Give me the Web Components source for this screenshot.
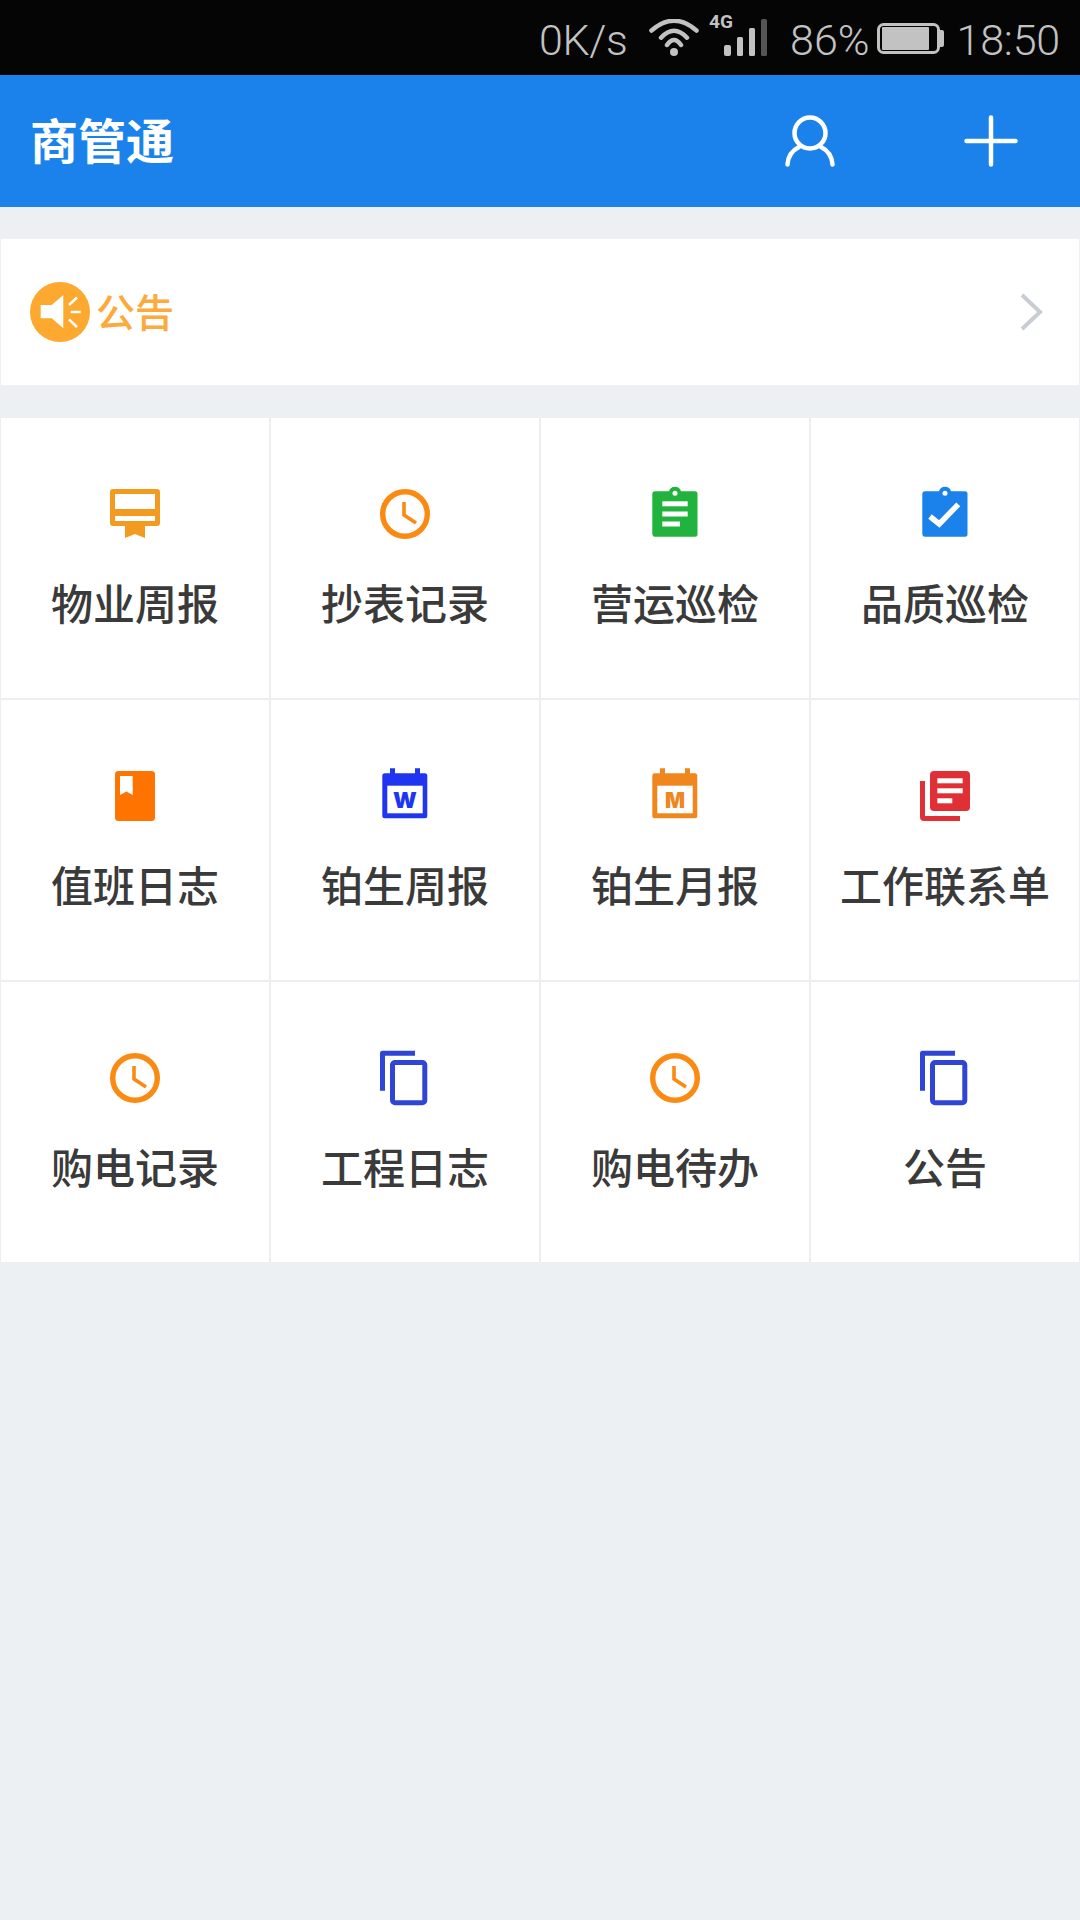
<!DOCTYPE html>
<html lang="zh-CN">
<head>
<meta charset="utf-8">
<title>商管通</title>
<style>
html,body{margin:0;padding:0;background:#ecf0f3;}
body{width:1080px;min-height:1920px;font-family:"Noto Sans CJK SC","Noto Sans",sans-serif;display:flex;flex-direction:column;}
</style>
</head>
<body>
<status-bar></status-bar>
<app-header title="商管通"></app-header>
<notice-bar>公告</notice-bar>
<app-grid>
  <grid-item icon="report" color="#f39a21">物业周报</grid-item>
  <grid-item icon="clock" color="#fb8a12">抄表记录</grid-item>
  <grid-item icon="clipLines" color="#22b33f">营运巡检</grid-item>
  <grid-item icon="clipCheck" color="#1a82ea">品质巡检</grid-item>
  <grid-item icon="book" color="#ff7300">值班日志</grid-item>
  <grid-item icon="calW" color="#2035f0">铂生周报</grid-item>
  <grid-item icon="calM" color="#f0861e">铂生月报</grid-item>
  <grid-item icon="news" color="#e02f35">工作联系单</grid-item>
  <grid-item icon="clock" color="#fb8a12">购电记录</grid-item>
  <grid-item icon="copy" color="#2f45d6">工程日志</grid-item>
  <grid-item icon="clock" color="#fb8a12">购电待办</grid-item>
  <grid-item icon="copy" color="#2f45d6">公告</grid-item>
</app-grid>
<script>
const ICONS = {
  report:`<path fill="currentColor" d="M3 0h44a3 3 0 0 1 3 3v31a3 3 0 0 1-3 3H35v12l-10-4-10 4V37H3a3 3 0 0 1-3-3V3a3 3 0 0 1 3-3z"/><rect x="5" y="5" width="40" height="15" fill="#fff"/><rect x="5" y="27" width="40" height="5" fill="#fff"/>`,
  clock:`<circle cx="25" cy="25" r="22.3" fill="none" stroke="currentColor" stroke-width="5.4"/><path d="M24 13v13l12 8" fill="none" stroke="currentColor" stroke-width="3.6"/>`,
  clipLines:`<path fill="currentColor" d="M5 2.3h14a6.2 6.2 0 0 1 12 0h14a2.5 2.5 0 0 1 2.5 2.5v40.4a2.5 2.5 0 0 1-2.5 2.5H5a2.7 2.7 0 0 1-2.7-2.5V4.8A2.5 2.5 0 0 1 5 2.3z"/><circle cx="25" cy="4.3" r="2.5" fill="#fff"/><rect x="12.3" y="12.3" width="25.4" height="5" fill="#fff"/><rect x="12.3" y="22.5" width="25.4" height="5" fill="#fff"/><rect x="12.3" y="32.5" width="17.7" height="5" fill="#fff"/>`,
  clipCheck:`<path fill="currentColor" d="M5 2.3h14a6.2 6.2 0 0 1 12 0h14a2.5 2.5 0 0 1 2.5 2.5v40.4a2.5 2.5 0 0 1-2.5 2.5H5a2.7 2.7 0 0 1-2.7-2.5V4.8A2.5 2.5 0 0 1 5 2.3z"/><circle cx="25" cy="4.3" r="2.5" fill="#fff"/><path d="M10 27.5l9.3 7.5 19-19.7" fill="none" stroke="#fff" stroke-width="5.5"/>`,
  book:`<rect x="5" y="0" width="40" height="50" rx="3.5" fill="currentColor"/><path fill="#fff" d="M10 5h12.7v19l-6.3-3.4L10 24z"/>`,
  calW:`<path fill="currentColor" d="M10-2.7h5v5h20v-5h5v5h4.8a2.5 2.5 0 0 1 2.5 2.5v40a2.5 2.5 0 0 1-2.5 2.5H4.8a2.5 2.5 0 0 1-2.5-2.5v-40a2.5 2.5 0 0 1 2.500-2.500H10z"/><rect x="7.3" y="14.7" width="35.4" height="27.6" fill="#fff"/><text x="25" y="37" text-anchor="middle" font-family="Inter,'Liberation Sans',sans-serif" font-weight="900" font-size="22" fill="currentColor">W</text>`,
  calM:`<path fill="currentColor" d="M10-2.7h5v5h20v-5h5v5h4.8a2.5 2.5 0 0 1 2.5 2.5v40a2.5 2.5 0 0 1-2.5 2.5H4.8a2.5 2.5 0 0 1-2.5-2.5v-40a2.5 2.5 0 0 1 2.500-2.500H10z"/><rect x="7.3" y="14.7" width="35.4" height="27.6" fill="#fff"/><text x="25" y="36.5" text-anchor="middle" font-family="Inter,'Liberation Sans',sans-serif" font-weight="900" font-size="21" fill="currentColor">M</text>`,
  news:`<rect x="10" y="0" width="40" height="40" rx="4" fill="currentColor"/><rect x="17.3" y="7.3" width="25.4" height="5" fill="#fff"/><rect x="17.3" y="17.3" width="25.4" height="5" fill="#fff"/><rect x="17.3" y="27.3" width="15" height="5" fill="#fff"/><path fill="currentColor" d="M0 10h5v35h35v5H4a4 4 0 0 1-4-4z"/>`,
  copy:`<path fill="currentColor" d="M2.500-2.300H35v5H5v35H0V.2a2.500 2.500 0 0 1 2.500-2.500z"/><rect x="12.500" y="9.500" width="32.300" height="40.300" rx="2.500" fill="none" stroke="currentColor" stroke-width="5"/>`
};

function define(name, css, html, setup){
  customElements.define(name, class extends HTMLElement{
    constructor(){
      super();
      const r = this.attachShadow({mode:'open'});
      r.innerHTML = `<style>${css}</style>${html}`;
    }
    connectedCallback(){ if(setup) setup(this, this.shadowRoot); }
  });
}

define('status-bar', `
  :host{display:flex;align-items:center;justify-content:flex-end;height:75px;background:#050505;color:#c2c2c2;
    font-family:Roboto,"Liberation Sans",sans-serif;font-weight:300;font-size:43px;line-height:52px;padding:4px 20px 0 0;box-sizing:border-box;flex:none;}
  svg{display:block;flex:none;}
  span{white-space:nowrap;flex:none;}
  .net{margin-right:21px;letter-spacing:-.3px;}
  .wifi{margin:0 10px 3px 0;}
  .sig{margin:0 23.5px 9px 0;}
  .pct{margin-right:7px;}
  .bat{margin:0 13px 2px 0;}
  .time{letter-spacing:-.2px;}
  .four{font-family:Roboto,"Liberation Sans",sans-serif;font-weight:700;font-size:19px;fill:#c2c2c2;}
`,`
  <span class="net">0K/s</span>
  <svg class="wifi" width="50" height="38" viewBox="0 0 50 38">
    <path d="M2.500 11.500Q25 -8 47.500 11.500M12 18.700Q25 4.700 38 18.700M18 26Q25 16 32 26" fill="none" stroke="#c2c2c2" stroke-width="4.500" stroke-linecap="round"/>
    <circle cx="25" cy="33" r="4" fill="#c2c2c2"/>
  </svg>
  <svg class="sig" width="58" height="42" viewBox="0 0 58 42">
    <text class="four" x="0" y="14">4G</text>
    <rect x="15" y="31" width="7" height="11" rx="2" fill="#c2c2c2"/>
    <rect x="28" y="23" width="6" height="19" rx="1.500" fill="#c2c2c2"/>
    <rect x="40" y="14" width="6" height="28" rx="1.500" fill="#c2c2c2"/>
    <rect x="52" y="5" width="6" height="37" rx="1.500" fill="#555"/>
  </svg>
  <span class="pct">86%</span>
  <svg class="bat" width="67" height="31" viewBox="0 0 67 31">
    <rect x="1.500" y="1.500" width="60" height="28" rx="5" fill="none" stroke="#c2c2c2" stroke-width="3"/>
    <rect x="5" y="4" width="47" height="23" rx="1" fill="#c2c2c2"/>
    <path d="M63 7h2a2 2 0 0 1 2 2v13a2 2 0 0 1-2 2h-2z" fill="#c2c2c2"/>
  </svg>
  <span class="time">18:50</span>
`);

define('app-header', `
  :host{display:flex;align-items:center;height:132px;background:#1a82ea;color:#fff;flex:none;padding-left:30px;box-sizing:border-box;}
  h1{margin:0 0 5px;font:700 48px/127px "Noto Sans CJK SC",sans-serif;flex:1;}
  svg{display:block;flex:none;}
  .user{margin-right:129px;}
  .plus{margin-right:62px;}
`,`
  <h1></h1>
  <svg class="user" width="50" height="52" viewBox="0 0 50 52" fill="none" stroke="#fff" stroke-width="4.500" stroke-linecap="round">
    <circle cx="25" cy="18" r="15.500"/>
    <path d="M2.500 49.500C3 41 8 35 14 32M47.500 49.500C47 41 42 35 36 32"/>
  </svg>
  <svg class="plus" width="54" height="52" viewBox="0 0 54 52" fill="none" stroke="#fff" stroke-width="4.500" stroke-linecap="round">
    <path d="M27 2.500V49.500M2.500 26H51.500"/>
  </svg>
`,(el,r)=>{ r.querySelector('h1').textContent = el.getAttribute('title'); });

define('notice-bar', `
  :host{display:flex;align-items:center;height:148px;margin-top:31px;background:#fff;flex:none;box-sizing:border-box;
    border:1px solid #eef0f2;padding:0 36px 0 29px;}
  svg{display:block;flex:none;}
  .txt{font:500 39px/144px "Noto Sans CJK SC",sans-serif;color:#fcaa3c;margin:0 0 4px 6px;flex:1;}
`,`
  <svg width="60" height="60" viewBox="0 0 60 60">
    <circle cx="30" cy="30" r="30" fill="#fda82f"/>
    <path d="M10.700 23H21.700L33.300 13V46.300L21.700 36.300H10.700z" fill="#fff"/>
    <path d="M39 23L47 15.500M40.700 30H50.700M39 37.300L47 45" stroke="#fff" stroke-width="2.500" fill="none"/>
  </svg>
  <span class="txt"><slot></slot></span>
  <svg width="24" height="38" viewBox="0 0 24 38"><path d="M3 2L21 19L3 36" fill="none" stroke="#c9cdd2" stroke-width="4"/></svg>
`);

define('app-grid', `
  :host{display:grid;grid-template-columns:repeat(4,268px);grid-auto-rows:280px;gap:2px;padding:1px;margin-top:31px;background:#eceef0;flex:none;}
`,`<slot></slot>`);

define('grid-item', `
  :host{display:flex;flex-direction:column;align-items:center;background:#fff;padding-top:71px;box-sizing:border-box;min-width:0;}
  svg{display:block;width:50px;height:50px;overflow:visible;flex:none;}
  .lbl{margin-top:33px;font:500 42px/60px "Noto Sans CJK SC",sans-serif;color:#3a3a3a;white-space:nowrap;}
`,`<svg viewBox="0 0 50 50"></svg><div class="lbl"><slot></slot></div>`,
(el,r)=>{
  const s = r.querySelector('svg');
  s.style.color = el.getAttribute('color');
  s.innerHTML = ICONS[el.getAttribute('icon')];
});
</script>
</body>
</html>
